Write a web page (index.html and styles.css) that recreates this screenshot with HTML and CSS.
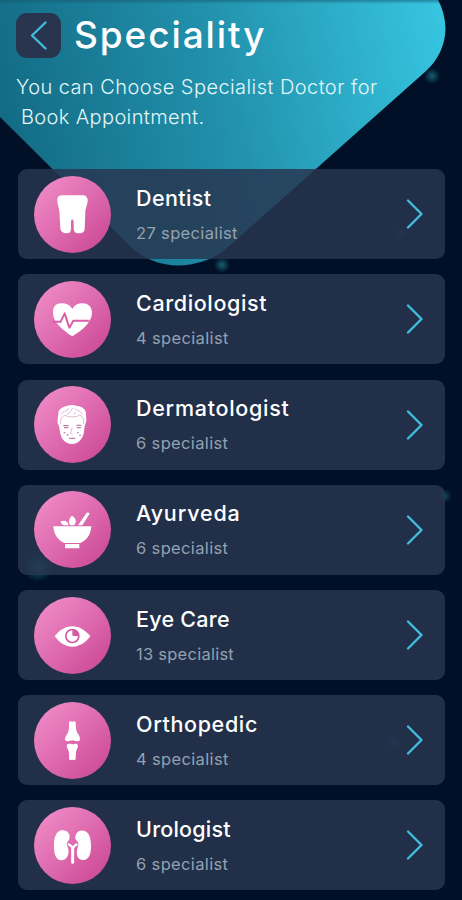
FILE: index.html
```
<!DOCTYPE html>
<html lang="en">
<head>
<meta charset="utf-8">
<title>Speciality</title>
<link rel="stylesheet" href="styles.css">
</head>
<body>
<main class="screen">
  <svg class="backdrop" viewBox="0 0 462 900" aria-hidden="true">
    <defs>
      <linearGradient id="teal" gradientUnits="userSpaceOnUse" x1="0" y1="110" x2="440" y2="20">
        <stop offset="0" stop-color="#136b85"/>
        <stop offset=".5" stop-color="#2292ad"/>
        <stop offset="1" stop-color="#36c4df"/>
      </linearGradient>
      <linearGradient id="shade" x1="0" y1="0" x2="0" y2="1">
        <stop offset="0" stop-color="#16556d" stop-opacity=".55"/>
        <stop offset="1" stop-color="#16556d" stop-opacity="0"/>
      </linearGradient>
      <radialGradient id="glow">
        <stop offset="0" stop-color="#1b7280" stop-opacity=".8"/>
        <stop offset="1" stop-color="#1b7280" stop-opacity="0"/>
      </radialGradient>
    </defs>
    <path fill="url(#teal)" d="M0 0H438Q445 12 445.500 29C445 46 438 60 426 71L227 248C217 257 200 265 178 265.500C158 265 143 258 131 247L0 117Z"/>
    <path fill="url(#shade)" d="M0 0H438L440 4H0Z"/>
    <circle cx="432" cy="76" r="8" fill="url(#glow)"/>
    <circle cx="222" cy="265" r="8" fill="url(#glow)"/>
    <circle cx="400" cy="234" r="8" fill="url(#glow)" opacity=".5"/>
    <circle cx="445" cy="496" r="7" fill="url(#glow)" opacity=".7"/>
    <circle cx="38" cy="567" r="15" fill="url(#glow)"/>
    <circle cx="394" cy="742" r="8" fill="url(#glow)" opacity=".5"/>
  </svg>

  <header class="header">
    <div class="title-row">
      <button class="back" aria-label="Back">
        <svg viewBox="0 0 44 45"><path d="M29 9.500L15.500 22.500L29 35.500"/></svg>
      </button>
      <h1 class="title">Speciality</h1>
    </div>
    <p class="intro"><span class="line line-first">You can Choose Specialist Doctor for</span><span class="line line-second">Book Appointment.</span></p>
  </header>

  <section class="list">
    <article class="card">
      <svg class="icon" viewBox="42 17 231 231"><path d="M112 89C112 78 118 75 128 75H187C197 75 203 81 203 90C203 105 196 112 196 126L194 177C193 185 187 189 179 189H172C163 187 161 181 161 171V153C160 146 153 146 153 153V175C153 184 149 189 141 189C129 189 122 184 121 173L118 122C116 109 112 103 112 89Z"/></svg>
      <div class="info"><h2 class="name dentist">Dentist</h2><p class="count">27 specialist</p></div>
      <svg class="arrow" viewBox="0 0 18 32"><path d="M2 2.500L15.500 16L2 29.500"/></svg>
    </article>
    <article class="card">
      <svg class="icon" viewBox="42 17 231 231"><path d="M157 183C139 171 100 146 99 113C98 91 111 83 126 84C142 84 151 92 157 101C165 89 174 84 188 84C204 84 216 94 216 113C215 145 177 171 157 183Z"/><path class="cut" d="M98 139H122L134 114L148 157L160 136H208"/></svg>
      <div class="info"><h2 class="name cardiologist">Cardiologist</h2><p class="count">4 specialist</p></div>
      <svg class="arrow" viewBox="0 0 18 32"><path d="M2 2.500L15.500 16L2 29.500"/></svg>
    </article>
    <article class="card">
      <svg class="icon" viewBox="42 17 231 231"><path d="M115 99C116 84 130 80 140 77Q156 71 171 77C187 79 198 87 198 101L199 118C199 127 195 131 194 137L191 160C186 177 174 190 156 191C137 191 125 177 121 160L117 137Q111 127 113 117Z"/><path class="fine" d="M121 130C120 114 128 107 136 105C146 111 169 112 179 104C188 108 193 116 191 130M124 102L134 91M136 94L147 84M151 94L158 83M165 84L175 94M175 89L188 102M142 101L151 96M161 102L168 96"/><path class="features" d="M130 136H146M169 135H184M132 142H145M170 142H183M147 174H166M131 157H136M140 164H145M171 157H176M178 165H183"/><path class="fine" d="M157 142L151 158L158 161"/></svg>
      <div class="info"><h2 class="name dermatologist">Dermatologist</h2><p class="count">6 specialist</p></div>
      <svg class="arrow" viewBox="0 0 18 32"><path d="M2 2.500L15.500 16L2 29.500"/></svg>
    </article>
    <article class="card">
      <svg class="icon" viewBox="42 17 231 231"><path d="M100 123H214C213 147 201 164 181 173H133C113 164 101 147 100 123ZM135 176H178V189H135ZM121 109C134 103 144 107 146 120H132Q124 118 121 109ZM156 91C169 99 171 110 162 120H152C144 111 146 99 156 91ZM174 120L198 85Q202 79 208 83Q210 86 206 90L187 120Z"/></svg>
      <div class="info"><h2 class="name ayurveda">Ayurveda</h2><p class="count">6 specialist</p></div>
      <svg class="arrow" viewBox="0 0 18 32"><path d="M2 2.500L15.500 16L2 29.500"/></svg>
    </article>
    <article class="card">
      <svg class="icon" viewBox="42 17 231 231"><path d="M104 135C119 116 136 105 157 105C178 105 196 117 211 135C196 155 178 166 157 166C136 166 119 155 104 135Z"/><circle class="iris" cx="157" cy="134" r="22"/><path d="M157 117A17 17 0 1 0 174 134H161Q157 134 157 130Z"/></svg>
      <div class="info"><h2 class="name eye">Eye Care</h2><p class="count count-wide">13 specialist</p></div>
      <svg class="arrow" viewBox="0 0 18 32"><path d="M2 2.500L15.500 16L2 29.500"/></svg>
    </article>
    <article class="card">
      <svg class="icon" viewBox="42 17 231 231"><path d="M147 77Q148 74 153 75Q157 78 161 75Q166 74 167 78C167 96 169 107 175 114Q180 120 180 128Q180 135 173 135C164 135 162 132 157 132C152 132 150 135 142 135Q134 134 135 126Q137 118 142 112C148 102 147 94 147 77ZM143 143C151 141 153 144 158 144C163 144 166 140 171 143Q176 147 172 156C167 164 168 172 167 188Q166 192 161 191Q157 189 153 191Q148 192 147 187C148 173 147 164 142 156Q138 147 143 143Z"/></svg>
      <div class="info"><h2 class="name orthopedic">Orthopedic</h2><p class="count">4 specialist</p></div>
      <svg class="arrow" viewBox="0 0 18 32"><path d="M2 2.500L15.500 16L2 29.500"/></svg>
    </article>
    <article class="card">
      <svg class="icon" viewBox="42 17 231 231"><path d="M124 87C141 84 152 96 148 112C147 119 139 121 141 130L145 144C148 164 138 177 124 177C108 177 101 157 102 130C102 106 110 89 124 87ZM191 88C207 91 213 109 213 135C213 160 206 176 190 176C177 177 168 167 171 147L175 130C177 121 168 119 166 111C165 96 176 85 191 88Z"/><path class="tube" d="M144 128Q157 134 158 143Q160 134 172 128"/><path class="duct" d="M158 138V183"/></svg>
      <div class="info"><h2 class="name urologist">Urologist</h2><p class="count">6 specialist</p></div>
      <svg class="arrow" viewBox="0 0 18 32"><path d="M2 2.500L15.500 16L2 29.500"/></svg>
    </article>
  </section>
</main>
</body>
</html>
```
FILE: styles.css
```
* { box-sizing: border-box; }
body { margin: 0; background: #011027; font-family: Inter, "Open Sans", sans-serif; color: #fff; }
h1, h2, p { margin: 0; }
.screen { position: relative; width: 462px; height: 900px; overflow: hidden; isolation: isolate; padding: 12px 17px 0 16px; }
.backdrop { position: absolute; inset: 0; z-index: -1; width: 462px; height: 900px; }
.header { height: 157.300px; }
.title-row { display: flex; align-items: center; gap: 13px; height: 46px; }
.back { width: 45px; height: 45px; padding: 0; border: 0; border-radius: 11px; background: #29354f; }
.back svg { display: block; width: 45px; height: 45px; }
.back path, .arrow path { fill: none; stroke: #41bcdc; stroke-width: 2.4; stroke-linecap: round; stroke-linejoin: round; }
.title { font-size: 37px; line-height: 46px; font-weight: 500; letter-spacing: 1.900px; }
.intro { margin-top: 15px; font-size: 20px; line-height: 29.500px; font-weight: 300; color: #e2f6fa; }
.line { display: block; white-space: nowrap; }
.line-first { letter-spacing: .430px; }
.line-second { padding-left: 5px; letter-spacing: .370px; }
.list { display: grid; gap: 15.200px; padding-left: 2px; }
.card { display: flex; align-items: center; width: 427px; height: 90px; padding: 0 21px 0 16px; border-radius: 9px; background: rgba(39, 54, 80, .84); }
.icon { width: 77px; height: 77px; border-radius: 50%; background: linear-gradient(135deg, #ef8bc5 8%, #df6cb0 48%, #ca4794 95%); fill: #fff; }
.info { flex: 1; padding: 2px 0 0 25px; }
.name { font-size: 21.500px; line-height: 30px; font-weight: 500; white-space: nowrap; }
.dentist { letter-spacing: .400px; }
.cardiologist { letter-spacing: .630px; }
.dermatologist { letter-spacing: .720px; }
.ayurveda { letter-spacing: .850px; }
.eye { letter-spacing: .250px; }
.orthopedic { letter-spacing: .650px; }
.urologist { letter-spacing: .220px; }
.count { margin-top: 5px; font-size: 16.500px; line-height: 30px; font-weight: 400; letter-spacing: .350px; color: #94a1af; white-space: nowrap; }
.count-wide { letter-spacing: .250px; }
.arrow { width: 18px; height: 32px; }
.cut { fill: none; stroke: #d95fa8; stroke-width: 6; stroke-linejoin: round; }
.fine { fill: none; stroke: #dfa3c8; stroke-width: 2.500; }
.features { fill: none; stroke: #bc81a4; stroke-width: 4; }
.iris { fill: #d35ba2; }
.tube { fill: none; stroke: #fff; stroke-width: 6; stroke-linejoin: round; }
.duct { fill: none; stroke: #fff; stroke-width: 9; stroke-linecap: round; }
```
